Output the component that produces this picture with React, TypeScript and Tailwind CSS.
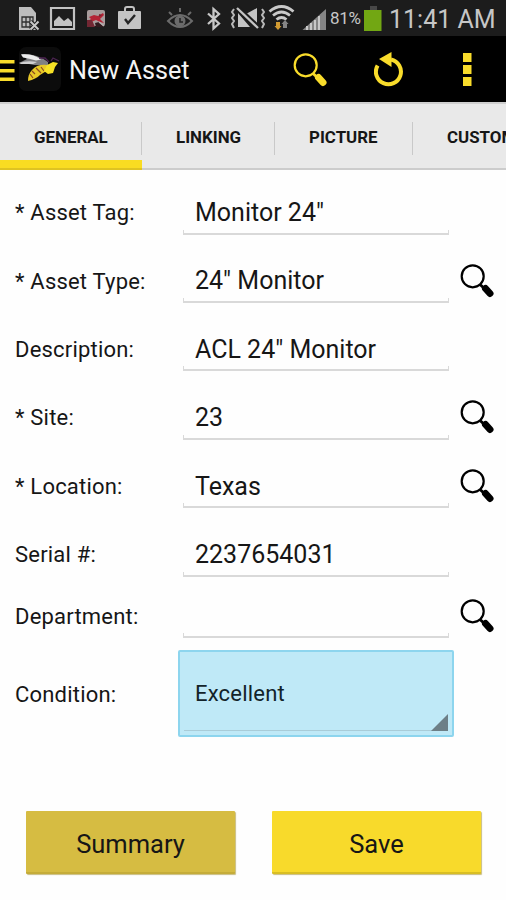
import React from "react";

const FONT = "font-['Roboto','Liberation_Sans',sans-serif]";

function SearchIcon({ className }: { className: string }) {
  return (
    <svg className={className} width="34" height="34" viewBox="0 0 34 34" fill="none" stroke="currentColor">
      <circle cx="12.700" cy="12.300" r="11" strokeWidth="2.200" />
      <path d="M20 20.500L25 25" strokeWidth="3" />
      <path d="M25.500 24.500L30 29.500" strokeWidth="7" strokeLinecap="round" />
    </svg>
  );
}

function StatusIcons() {
  return (
    <svg width="330" height="36" viewBox="0 0 330 36" fill="none">
      {/* SIM card with cross */}
      <path d="M19 7h12l5 6v17H19z" fill="#bdbdbd" />
      <path d="M22 17h11v10H22zM22 22h11M26 17v10M30 17v10" stroke="#303030" strokeWidth="1.3" />
      <path d="M30.500 21.500l8 8M38.500 21.500l-8 8" stroke="#1c1c1c" strokeWidth="4" />
      <path d="M30.500 21.500l8 8M38.500 21.500l-8 8" stroke="#c8c8c8" strokeWidth="2" />
      {/* picture */}
      <path d="M51 8h23v21H51z" stroke="#c2c2c2" strokeWidth="2.2" />
      <path d="M54 26v-5l5-5 5 5 4-3 4 4v4z" fill="#c2c2c2" />
      {/* red app */}
      <rect x="87" y="10" width="18" height="16" rx="2" fill="#a89c9c" />
      <path d="M89 17l5-2 4 1 5-3 1 2-4 4 4 4-4-1-4-2-5 2-3-1 3-2z" fill="#b42335" />
      <path d="M87 20l5 0 3 7h-8zM99 14l3 1-3 2z" fill="#722733" />
      <path d="M95 23l4-1 5 5h-8z" fill="#30191d" />
      <path d="M99 22l5 4" stroke="#b5b0b0" strokeWidth="1.500" />
      {/* shopping bag */}
      <path d="M125 12V9q0-2 2-2h5q2 0 2 2v3" stroke="#c2c2c2" strokeWidth="2" />
      <rect x="118" y="11" width="23" height="18" rx="1" fill="#c4c4c4" />
      <path d="M125 19l3 4 7-8" stroke="#252525" strokeWidth="2.4" />
      {/* smart stay eye */}
      <path d="M168 21q12-12 24 0q-12 12-24 0z" stroke="#6b6b6b" strokeWidth="2" />
      <circle cx="180" cy="21" r="5.5" fill="#6b6b6b" />
      <path d="M180 18v4h3" stroke="#222" strokeWidth="1.5" />
      <path d="M169 12l3 3M180 8v4M191 12l-3 3" stroke="#6b6b6b" strokeWidth="2" />
      {/* bluetooth */}
      <path d="M208 13.500l11 10-5.500 5V9l5.500 5-11 10" stroke="#c8c8c8" strokeWidth="2.3" />
      {/* vibrate */}
      <path d="M238 13l12 14h-12zM246 14l11-6v18z" fill="#c4c4c4" />
      <path d="M237 7l22 21" stroke="#1c1c1c" strokeWidth="5" />
      <path d="M237 8l21 20" stroke="#c4c4c4" strokeWidth="2.3" />
      <path d="M234 9l-2 3 2 3-2 3 2 3-2 3 2 4M262 9l2 3-2 3 2 3-2 3 2 3-2 4" stroke="#b8b8b8" strokeWidth="2" />
      {/* wifi */}
      <path d="M269.500 11.500q12-10 24 0M273 15.500q8.500-7 17 0M276.500 19.500q5-4 10 0" stroke="#c9c9c9" strokeWidth="2.8" />
      <path d="M276 22h4v4h1.500l-3.500 4-3.500-4h1.500z" fill="#d29b32" />
      <path d="M283 28v-4h-1.500l3.500-4 3.500 4H287v4z" fill="#858585" />
      {/* signal */}
      <path d="M302.500 30L326 9v21z" fill="#858585" />
      <path d="M307 26v4M311 23v7M315 20v10M319 16v14" stroke="#c8c8c8" strokeWidth="2" />
    </svg>
  );
}

function BeeLogo() {
  return (
    <svg width="42" height="44" viewBox="0 0 42 44" fill="none">
      <rect x="0" y="0" width="42" height="44" rx="7" fill="#0c0c0c" />
      <path d="M2 7q15-1 27 8l0 3q-12 1-19-1l-10-1 8-4z" fill="#808083" />
      <path d="M2 7.500q12-1 20 5l-5 1q-7-2-13-3z" fill="#ececec" />
      <path d="M0 16q8-3 18-1l-4 2-12 0z" fill="#d0d0d2" />
      <path d="M28 18q-10-1-15 5-4 4-4 11 8-2 12-6l8-5z" fill="#e8c928" />
      <path d="M13 24l3 3M11 27l3 4M17 21l5 5M22 20l3 4" stroke="#8b4a20" strokeWidth="1.200" />
      <path d="M28 18l6-3 5 1-3 4-2 6-5 1-4-3z" fill="#f6e125" />
      <path d="M20 11l6 0 4 4M32 14l2-3 6 3" stroke="#4c2452" strokeWidth="1.300" />
    </svg>
  );
}

const tabs = [
  { name: "GENERAL", box: "w-[142px] pl-[34px]" },
  { name: "LINKING", box: "w-[133px] pl-[34px]" },
  { name: "PICTURE", box: "w-[138px] pl-[34px]" },
  { name: "CUSTOM", box: "w-[140px] pl-[34px]" },
];

const fields = [
  { label: "* Asset Tag:", value: 'Monitor 24"', search: false },
  { label: "* Asset Type:", value: '24" Monitor', search: true },
  { label: "Description:", value: 'ACL 24" Monitor', search: false },
  { label: "* Site:", value: "23", search: true },
  { label: "* Location:", value: "Texas", search: true },
  { label: "Serial #:", value: "2237654031", search: false },
  { label: "Department:", value: "", search: true },
];

function Field({ label, value, search }: { label: string; value: string; search: boolean }) {
  return (
    <div className={`flex items-center pl-[15px] ${value ? "h-[68.4px]" : "h-[55px]"}`}>
      <div className="w-[168px] pt-[1px] text-[22px] tracking-[0.2px] whitespace-nowrap">{label}</div>
      <div className="flex h-[45px] w-[266px] flex-col justify-end">
        <div className="flex h-[41px] items-center pt-[5px] pl-[12px] text-[25px] whitespace-nowrap">{value}</div>
        <div className="-mt-[1px] h-[5px] shrink-0 border-x border-b-2 border-[#d9d9d9]" />
      </div>
      {search && <SearchIcon className="ml-[11px] shrink-0 text-black" />}
    </div>
  );
}

export default function App() {
  return (
    <div className={`flex h-[900px] w-[506px] flex-col overflow-hidden bg-[#fefefe] text-[#161616] ${FONT}`}>
      <div className="flex h-[36px] shrink-0 items-center bg-[#1c1c1c] text-[#c6c6c6]">
        <StatusIcons />
        <span className="w-[34px] pt-[2px] text-[17px] tracking-[-0.3px]">81%</span>
        <svg width="18" height="36" viewBox="0 0 18 36">
          <path d="M6 6h7v4H6z" fill="#484848" />
          <path d="M0 10h17.500v21H0z" fill="#72a713" />
        </svg>
        <span className="ml-[7px] pt-[4px] text-[25px] whitespace-nowrap">11:41 AM</span>
      </div>

      <div className="flex h-[66px] shrink-0 items-center bg-black">
        <svg width="19" height="66" viewBox="0 0 19 66">
          <path d="M0 24h14.500v3.500H0zM0 33h14.500v3.500H0zM0 41.500h14.500v3.500H0z" fill="#f9dc2b" />
        </svg>
        <BeeLogo />
        <div className="ml-[8px] w-[224px] pt-[4px] text-[25.2px] whitespace-nowrap text-[#f4f4f4]">New Asset</div>
        <SearchIcon className="mt-[1px] shrink-0 text-[#f9dc2b]" />
        <svg className="ml-[47px] shrink-0" width="32" height="38" viewBox="0 0 32 38" fill="none">
          <path d="M3.600 15.500A12.500 12.500 0 1 0 17 9.500" stroke="#f9dc2b" strokeWidth="4" />
          <path d="M5 9L17.500 2v15z" fill="#f9dc2b" />
        </svg>
        <svg className="ml-[57px] shrink-0" width="10" height="36" viewBox="0 0 10 36" fill="#f9dc2b">
          <path d="M0 2h8.500v9H0zM0 14h8.500v9H0zM0 26h8.500v9H0z" />
        </svg>
      </div>

      <div className="flex h-[68px] shrink-0 border-t-2 border-t-[#cfcfcf] bg-[#e9e9e9]">
        {tabs.map((t, i) => (
          <div key={t.name} className={`relative flex shrink-0 flex-col ${t.box}`}>
            <div className="pt-[23px] text-[16.9px] leading-[20px] font-bold whitespace-nowrap">{t.name}</div>
            <div className="absolute top-[18px] right-0 h-[33px] w-[1px] bg-[#c9c9c9]" />
            {i === 0 ? (
              <div className="absolute bottom-0 left-0 h-[10px] w-full border-b-2 border-[#dfc321] bg-[#f9dc22]" />
            ) : (
              <div className="absolute bottom-0 left-0 h-[2px] w-full bg-[#cccccc]" />
            )}
          </div>
        ))}
      </div>

      <div className="flex flex-col pt-[8px]">
        {fields.map((f) => (
          <Field key={f.label} {...f} />
        ))}
        <div className="mt-[6.600px] flex h-[87px] items-center pl-[15px]">
          <div className="w-[163px] pt-[2px] text-[22px] tracking-[0.2px]">Condition:</div>
          <div className="relative flex h-[87px] w-[276px] items-center rounded-[2px] border-2 border-[#8dd5ee] bg-[#bfe9f7] pl-[15px] text-[22px] tracking-[0.2px] text-[#12232a]">
            Excellent
            <div className="absolute bottom-[4px] left-[4px] h-[1px] w-[264px] bg-[#a9ccd8]" />
            <svg className="absolute right-[4px] bottom-[4px]" width="17" height="17" viewBox="0 0 17 17">
              <path d="M17 0v17H0z" fill="#6d7f87" />
            </svg>
          </div>
        </div>
      </div>

      <div className="mt-[74px] flex gap-[37px] pl-[26px] text-[25.5px]">
        <button className="h-[63px] w-[209px] rounded-[1px] border-b-2 border-[#c5ac39] bg-[#d6bc42] pt-[5px] shadow-[1px_1px_1px_#c9bd80]">Summary</button>
        <button className="h-[63px] w-[209px] rounded-[1px] border-b-2 border-[#d9be23] bg-[#f8da2b] pt-[5px] shadow-[1px_1px_1px_#c9bd80]">Save</button>
      </div>
    </div>
  );
}
